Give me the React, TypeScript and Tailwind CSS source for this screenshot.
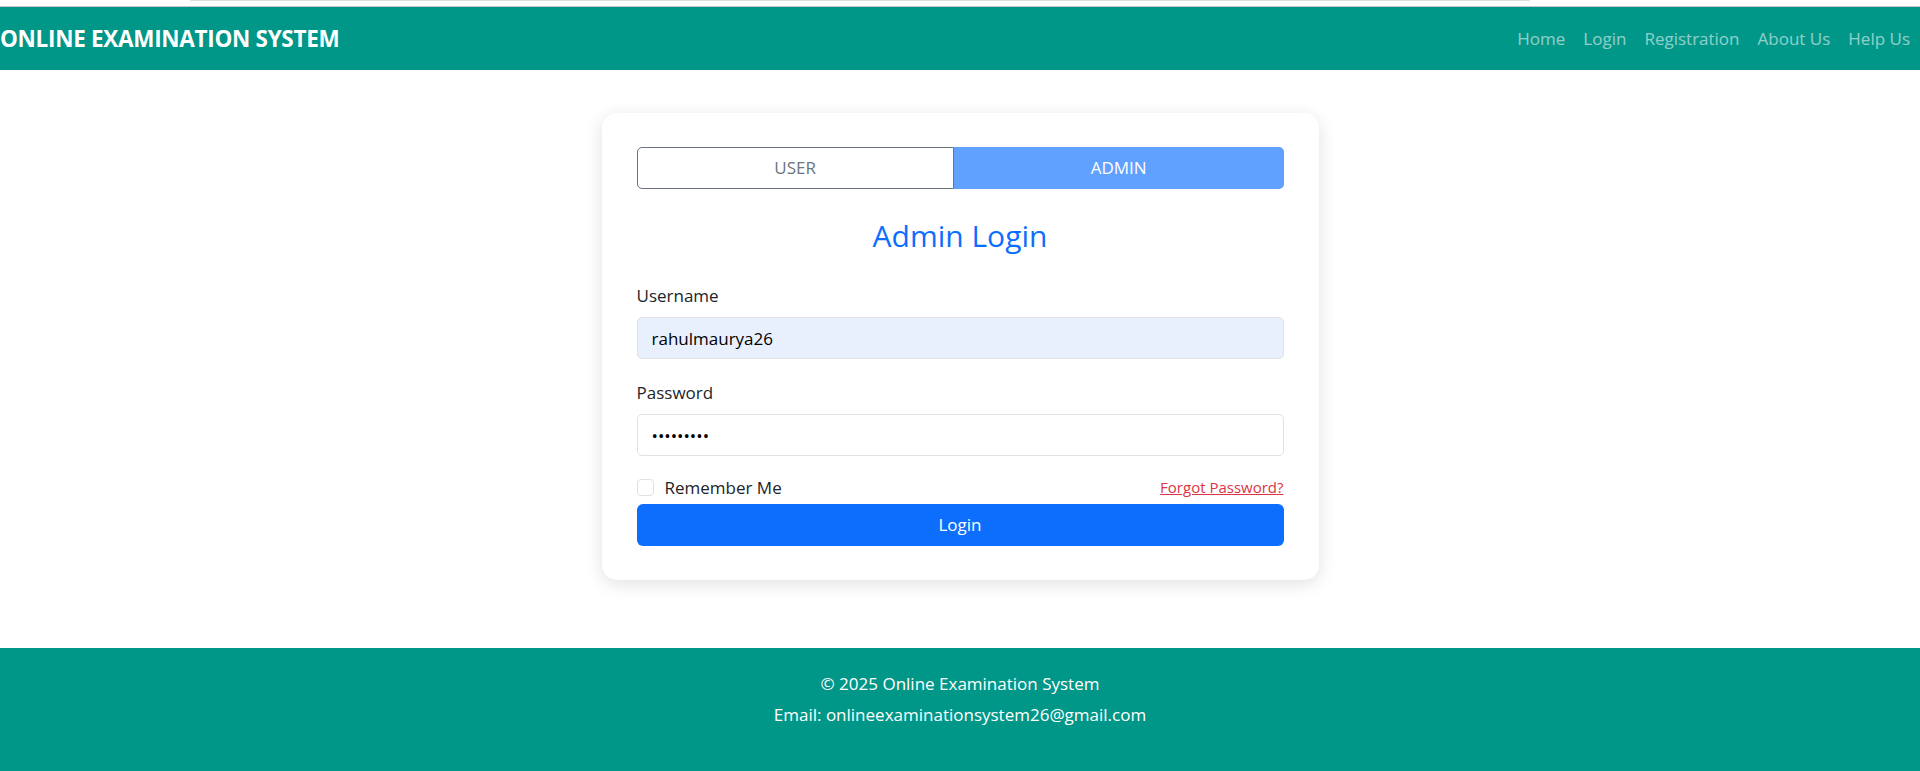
import { useState } from 'react'

export default function App() {
    const [role, setRole] = useState<'user' | 'admin'>('admin')
    const [username, setUsername] = useState('rahulmaurya26')
    const [password, setPassword] = useState('rahul1234')
    const [remember, setRemember] = useState(false)

    return (
        <div className="min-h-[771px] bg-white text-[#212529] font-['Open_Sans','Noto_Sans',sans-serif]">
            {/* strip above the navbar */}
            <div className="h-[7px] border-b border-[#c8c8c8] bg-white">
                <div className="ml-[190px] h-[1px] w-[1340px] rounded-b bg-[#dedede]" />
            </div>

            <nav className="flex h-[63px] items-center justify-between bg-[#009688]">
                <a href="#" className="text-[22.5px] font-bold tracking-[-0.3px] text-white">
                    ONLINE EXAMINATION SYSTEM
                </a>
                <ul className="flex items-center gap-[18px] pr-[10px] text-[17px] text-white/55">
                    <li><a href="#">Home</a></li>
                    <li><a href="#">Login</a></li>
                    <li><a href="#">Registration</a></li>
                    <li><a href="#">About Us</a></li>
                    <li><a href="#">Help Us</a></li>
                </ul>
            </nav>

            <main className="flex justify-center pt-[43px] pb-[68px]">
                <div className="w-[717px] rounded-[15px] bg-white px-[35px] pt-[34px] pb-[34px] shadow-[0_4px_18px_rgba(0,0,0,0.12)]">
                    <div className="flex h-[42px]">
                        <button
                            onClick={() => setRole('user')}
                            className={`flex-auto rounded-l-[5px] border border-[#6c757d] text-[17px] ${role === 'user' ? 'bg-[#60a0ff] text-white' : 'bg-white text-[#6c757d]'}`}
                        >
                            USER
                        </button>
                        <button
                            onClick={() => setRole('admin')}
                            className={`flex-auto rounded-r-[5px] text-[17px] ${role === 'admin' ? 'bg-[#60a0ff] text-white' : 'border border-[#6c757d] bg-white text-[#6c757d]'}`}
                        >
                            ADMIN
                        </button>
                    </div>

                    <h3 className="mt-[28px] text-center text-[30px] leading-[38px] font-medium text-[#0d6efd]">
                        {role === 'admin' ? 'Admin Login' : 'User Login'}
                    </h3>

                    <form onSubmit={(e) => e.preventDefault()}>
                        <div className="mt-[26px]">
                            <label className="block text-[17px] leading-[29px]">Username</label>
                            <input
                                value={username}
                                onChange={(e) => setUsername(e.target.value)}
                                className="mt-[7px] block h-[42px] w-full rounded-[5px] border border-[#dee2e6] bg-[#e8f0fe] px-[14px] text-[17px] text-black outline-none"
                            />
                        </div>

                        <div className="mt-[19px]">
                            <label className="block text-[17px] leading-[29px]">Password</label>
                            <input
                                type="password"
                                value={password}
                                onChange={(e) => setPassword(e.target.value)}
                                className="mt-[7px] block h-[42px] w-full rounded-[5px] border border-[#dee2e6] bg-white px-[14px] text-[17px] text-black outline-none"
                            />
                        </div>

                        <div className="mt-[17px] flex h-[29px] items-center justify-between">
                            <label className="flex items-center gap-[11px] text-[17px]">
                                <input
                                    type="checkbox"
                                    checked={remember}
                                    onChange={(e) => setRemember(e.target.checked)}
                                    className="h-[17px] w-[17px] appearance-none rounded-[4px] border border-[#dee2e6] bg-white"
                                />
                                Remember Me
                            </label>
                            <a href="#" className="text-[15px] text-[#dc3545] underline">Forgot Password?</a>
                        </div>

                        <button
                            type="submit"
                            className="mt-[2px] block h-[42px] w-full rounded-[6px] bg-[#0d6efd] text-[17px] text-white"
                        >
                            Login
                        </button>
                    </form>
                </div>
            </main>

            <footer className="flex h-[123px] flex-col items-center gap-[2px] bg-[#009688] pt-[21px] text-[17px] leading-[29px] text-white">
                <p>© 2025 Online Examination System</p>
                <p>Email: onlineexaminationsystem26@gmail.com</p>
            </footer>
        </div>
    )
}
